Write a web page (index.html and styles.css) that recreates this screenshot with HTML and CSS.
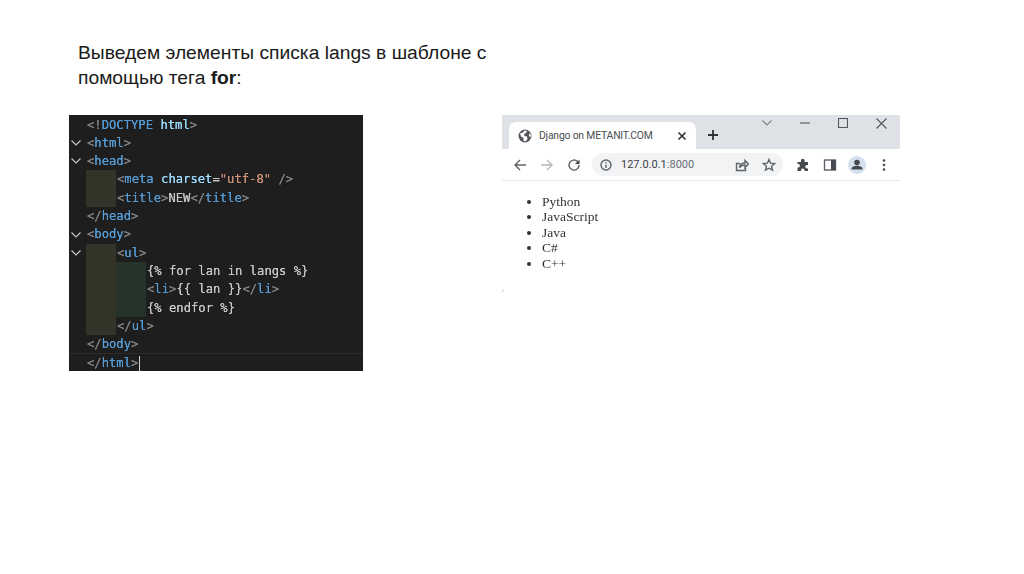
FILE: index.html
```html
<!DOCTYPE html>
<html lang="ru">
<head>
<meta charset="utf-8">
<title>Django шаблоны</title>
<link rel="stylesheet" href="styles.css">
</head>
<body>
<main class="slide">
  <p class="heading">Выведем элементы списка langs в шаблоне с<br>помощью тега <b>for</b>:</p>

  <section class="code">
    <div class="line"><span class="fold"></span><span class="src"><i>&lt;!</i><u>DOCTYPE</u> <em>html</em><i>&gt;</i></span></div>
    <div class="line"><span class="fold"><svg width="12" height="8" viewBox="0 0 12 8"><path d="M1.5 1.5 6 6l4.500-4.500"/></svg></span><span class="src"><i>&lt;</i><u>html</u><i>&gt;</i></span></div>
    <div class="line"><span class="fold"><svg width="12" height="8" viewBox="0 0 12 8"><path d="M1.5 1.5 6 6l4.500-4.500"/></svg></span><span class="src"><i>&lt;</i><u>head</u><i>&gt;</i></span></div>
    <div class="line"><span class="fold"></span><span class="guide olive"></span><span class="src"><i>&lt;</i><u>meta</u> <em>charset</em>=<s>"utf-8"</s> <i>/&gt;</i></span></div>
    <div class="line"><span class="fold"></span><span class="guide olive"></span><span class="src"><i>&lt;</i><u>title</u><i>&gt;</i>NEW<i>&lt;/</i><u>title</u><i>&gt;</i></span></div>
    <div class="line"><span class="fold"></span><span class="src"><i>&lt;/</i><u>head</u><i>&gt;</i></span></div>
    <div class="line"><span class="fold"><svg width="12" height="8" viewBox="0 0 12 8"><path d="M1.5 1.5 6 6l4.500-4.500"/></svg></span><span class="src"><i>&lt;</i><u>body</u><i>&gt;</i></span></div>
    <div class="line"><span class="fold"><svg width="12" height="8" viewBox="0 0 12 8"><path d="M1.5 1.5 6 6l4.500-4.500"/></svg></span><span class="guide olive"></span><span class="src"><i>&lt;</i><u>ul</u><i>&gt;</i></span></div>
    <div class="line"><span class="fold"></span><span class="guide olive"></span><span class="guide green"></span><span class="src">{% for lan in langs %}</span></div>
    <div class="line"><span class="fold"></span><span class="guide olive"></span><span class="guide green"></span><span class="src"><i>&lt;</i><u>li</u><i>&gt;</i>{{ lan }}<i>&lt;/</i><u>li</u><i>&gt;</i></span></div>
    <div class="line"><span class="fold"></span><span class="guide olive"></span><span class="guide green"></span><span class="src">{% endfor %}</span></div>
    <div class="line"><span class="fold"></span><span class="guide olive"></span><span class="src"><i>&lt;/</i><u>ul</u><i>&gt;</i></span></div>
    <div class="line"><span class="fold"></span><span class="src"><i>&lt;/</i><u>body</u><i>&gt;</i></span></div>
    <div class="line current"><span class="fold"></span><span class="src"><i>&lt;/</i><u>html</u><i>&gt;</i><span class="caret"></span></span></div>
  </section>

  <section class="browser">
    <div class="strip">
      <div class="tab">
        <svg class="favicon" width="14" height="14" viewBox="0 0 14 14"><circle cx="7" cy="7" r="6.500"/><path d="M2 4.500 5 3.500 6.500 1.500 9 2 8 4 6 5 6.500 7 9 7.500 9.500 10 7.500 12.500 5.500 11.500 5.500 9 3 7.500Z"/><path d="M11 4.500 13 5.500 12.500 8.500 11 7Z"/></svg>
        <span class="tab-title">Django on METANIT.COM</span>
        <svg class="tab-close" width="10" height="10" viewBox="0 0 10 10"><path d="M1.500 1.500l7 7M8.500 1.500l-7 7"/></svg>
      </div>
      <span class="newtab"><svg width="12" height="12" viewBox="0 0 12 12"><path d="M6 1v10M1 6h10"/></svg></span>
      <span class="winbtn chevron"><svg width="12" height="8" viewBox="0 0 12 8"><path d="M1.500 1.500 6 6l4.500-4.500"/></svg></span>
      <span class="winbtn"><svg width="10" height="2" viewBox="0 0 10 2"><path d="M0 1h10"/></svg></span>
      <span class="winbtn"><svg width="10" height="10" viewBox="0 0 10 10"><rect x=".5" y=".5" width="9" height="9"/></svg></span>
      <span class="winbtn"><svg width="11" height="11" viewBox="0 0 11 11"><path d="M.5.500l10 10M10.500.500l-10 10"/></svg></span>
    </div>
    <div class="toolbar">
      <span class="tool"><svg width="14" height="14" viewBox="0 0 14 14"><path d="M13 7H2M7 2 2 7l5 5"/></svg></span>
      <span class="tool off"><svg width="14" height="14" viewBox="0 0 14 14"><path d="M1 7h11M7 2l5 5-5 5"/></svg></span>
      <span class="tool"><svg width="14" height="14" viewBox="0 0 14 14"><path d="M12 7a5 5 0 1 1-1.500-3.500L12 5"/><path class="solid" d="M12.500 1.500v4.500H8Z"/></svg></span>
      <div class="omnibox">
        <svg class="info" width="12" height="12" viewBox="0 0 12 12"><circle cx="6" cy="6" r="5"/><path d="M6 5.500V9M6 3v1.300"/></svg>
        <span class="url">127.0.0.1<span class="port">:8000</span></span>
        <span class="omni-icons">
          <svg width="14" height="14" viewBox="0 0 14 14"><path d="M5 5.500H1.500v7h9V10"/><path d="M4.500 9.500C5 6.500 7 5 10 5V2.500L13.500 6 10 9.500V7C8 7 6 7.500 4.500 9.500Z"/></svg>
          <svg width="14" height="14" viewBox="0 0 14 14"><path d="M7 1.500 8.600 5.200l4 .4-3 2.700.9 3.900L7 10.200l-3.500 2 .9-3.900-3-2.700 4-.4Z"/></svg>
        </span>
      </div>
      <div class="actions">
        <span class="tool"><svg width="14" height="14" viewBox="0 0 14 14"><path class="solid" d="M5 2.500a1.800 1.800 0 0 1 3.600 0V4H12v3h-1a1.700 1.700 0 0 0 0 3.500h1V13H8.500v-1a1.800 1.800 0 0 0-3.500 0v1H1.500V9.500h1a1.800 1.800 0 0 0 0-3.500h-1V4H5Z"/></svg></span>
        <span class="tool"><svg width="14" height="14" viewBox="0 0 14 14"><rect x="1.500" y="2" width="11" height="10"/><path class="solid" d="M8 2h4.500v10H8Z"/></svg></span>
        <span class="tool"><svg class="avatar" width="20" height="20" viewBox="0 0 20 20"><circle cx="10" cy="10" r="9"/><circle class="solid" cx="10" cy="7.500" r="2.800"/><path class="solid" d="M4.500 14c0-2.500 3-3.300 5.500-3.300s5.500.8 5.500 3.300v.5h-11Z"/></svg></span>
        <span class="tool"><svg width="4" height="14" viewBox="0 0 4 14"><circle class="solid" cx="2" cy="2.500" r="1.300"/><circle class="solid" cx="2" cy="7" r="1.300"/><circle class="solid" cx="2" cy="11.500" r="1.300"/></svg></span>
      </div>
    </div>
    <ul class="langs">
      <li>Python</li>
      <li>JavaScript</li>
      <li>Java</li>
      <li>C#</li>
      <li>C++</li>
    </ul>
  </section>
</main>
</body>
</html>
```

FILE: styles.css
```css
* { box-sizing: border-box; }

html, body {
  margin: 0;
  height: 100%;
  background: #fff;
}

.slide {
  position: relative;
  width: 1024px;
  height: 574px;
  overflow: hidden;
}

.heading {
  position: absolute;
  left: 78px;
  top: 40px;
  margin: 0;
  font: 19.260px/25px "Liberation Sans", Arial, sans-serif;
  color: #1a1a1a;
  white-space: nowrap;
}

/* code editor picture */
.code {
  position: absolute;
  left: 69px;
  top: 115px;
  width: 294px;
  height: 256px;
  padding-top: .6px;
  background: #1e1e1e;
  font: 12.2px "DejaVu Sans Mono", monospace;
  color: #c8c8c8;
  text-shadow: 0 0 .4px currentColor;
  filter: blur(.4px);
  overflow: hidden;
}

.line {
  display: flex;
  height: 18.3px;
  line-height: 18.3px;
  white-space: pre;
}

.line.current {
  border-top: 1px solid #2b2b2b;
}

.fold {
  width: 17px;
  flex: none;
  display: flex;
  align-items: center;
  padding-left: 1px;
}

.fold svg path {
  fill: none;
  stroke: #c5c5c5;
  stroke-width: 1.2;
}

.guide {
  width: 30px;
  flex: none;
}

.olive { background: #333327; }
.green { background: #26332b; }

.src { padding-left: 1px; }
.src i { font-style: normal; color: #808080; }
.src u { text-decoration: none; color: #569cd6; }
.src em { font-style: normal; color: #9cdcfe; }
.src s { text-decoration: none; color: #ce9178; }

.caret {
  display: inline-block;
  width: 1px;
  height: 16px;
  margin-left: 1px;
  vertical-align: middle;
  background: #d4d4d4;
}

/* browser picture */
.browser {
  position: absolute;
  left: 502px;
  top: 115px;
  width: 398px;
  filter: blur(.4px);
  font-family: Roboto, "Liberation Sans", sans-serif;
}

.browser svg { display: block; }
.browser svg path,
.browser svg rect,
.browser svg circle {
  fill: none;
  stroke: #5f6368;
  stroke-width: 1.400;
}

.browser svg .solid { fill: #45484c; stroke: none; }
.browser .favicon circle { fill: #55585c; stroke: none; }
.browser .favicon path { fill: #fff; stroke: none; }
.browser .avatar circle:first-child { fill: #d5e0ee; stroke: none; }

.strip {
  display: flex;
  height: 34px;
  padding-left: 7px;
  background: #dee1e6;
}

.tab {
  display: flex;
  align-items: center;
  align-self: flex-end;
  width: 187px;
  height: 27px;
  padding: 0 9px;
  background: #fff;
  border-radius: 7px 7px 0 0;
}

.tab-title {
  margin-left: 7px;
  font-size: 10.400px;
  letter-spacing: -.2px;
  color: #4a4d51;
  white-space: nowrap;
}

.tab-close { margin-left: auto; }
.browser .tab-close path { stroke: #303134; stroke-width: 1.600; }

.newtab {
  display: flex;
  align-items: center;
  justify-content: center;
  align-self: flex-end;
  width: 22px;
  height: 28px;
  margin-left: 6px;
}

.browser .newtab path { stroke: #303134; stroke-width: 1.800; }

.winbtn {
  display: flex;
  align-items: center;
  justify-content: center;
  width: 38px;
  height: 16px;
}

.winbtn.chevron {
  width: 24px;
  margin: 0 7px 0 31px;
}

.browser .winbtn path,
.browser .winbtn rect { stroke: #55585c; stroke-width: 1.100; }
.browser .winbtn.chevron path { stroke: #7d8084; }

.toolbar {
  display: flex;
  align-items: center;
  height: 32px;
  padding-left: 4.500px;
  background: #fff;
  border-bottom: 1px solid #e6e6e6;
}

.tool {
  display: flex;
  align-items: center;
  justify-content: center;
  width: 27px;
  height: 26px;
}

.browser .tool.off path { stroke: #b5b8bc; }

.omnibox {
  display: flex;
  align-items: center;
  width: 191px;
  height: 23px;
  margin-left: 4.500px;
  padding: 0 4px 0 8px;
  background: #f1f3f4;
  border-radius: 12px;
}

.url {
  margin-left: 9px;
  font-size: 11px;
  color: #3c4043;
}

.port { color: #6a6e72; }

.omni-icons {
  display: flex;
  gap: 13px;
  margin-left: auto;
  margin-right: 3px;
}

.actions {
  display: flex;
  margin-left: 6px;
}

.langs {
  position: relative;
  margin: 0;
  height: 114px;
  padding: 13px 0 0 40px;
  list-style: disc;
  font: 13.500px/15.400px "Liberation Serif", "Times New Roman", serif;
  color: #333;
}

.langs::after {
  content: "";
  position: absolute;
  left: 0;
  top: 108px;
  width: 2px;
  height: 3px;
  background: #e8e8e8;
}
```
